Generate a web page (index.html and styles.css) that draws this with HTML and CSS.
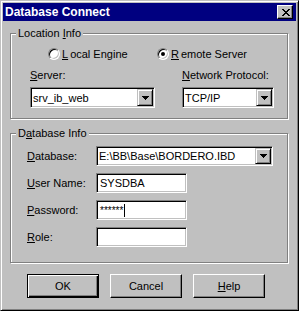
FILE: index.html
```html
<!DOCTYPE html>
<html lang="en">
<head>
  <meta charset="UTF-8">
  <title>Database Connect</title>
  <link rel="stylesheet" href="styles.css">
</head>
<body>
  <div class="window">
    <div class="titlebar">
      <span class="title">Database Connect</span>
      <span class="close-btn">
        <svg width="8" height="7" viewBox="0 0 8 7" shape-rendering="crispEdges">
          <path d="M0 0h2v1h-2z M6 0h2v1h-2z M1 1h2v1h-2z M5 1h2v1h-2z M2 2h4v1h-4z M3 3h2v1h-2z M2 4h4v1h-4z M1 5h2v1h-2z M5 5h2v1h-2z M0 6h2v1h-2z M6 6h2v1h-2z" fill="#000"/>
        </svg>
      </span>
    </div>

    <div class="dialog">
      <!-- Location -->
      <fieldset class="group">
        <legend>Location <u>I</u>nfo</legend>
        <div class="radio-row">
          <label class="radio"><span class="radio-mark"></span><u>L</u>ocal Engine</label>
          <label class="radio"><span class="radio-mark checked"></span><u>R</u>emote Server</label>
        </div>
        <div class="server-row">
          <div class="field-col">
            <div class="field-label"><u>S</u>erver:</div>
            <div class="combo combo-server">
              <span class="combo-text">srv_ib_web</span>
              <span class="combo-btn">
                <svg width="7" height="4" viewBox="0 0 7 4" shape-rendering="crispEdges"><path d="M0 0h7v1h-7z M1 1h5v1h-5z M2 2h3v1h-3z M3 3h1v1h-1z" fill="#000"/></svg>
              </span>
            </div>
          </div>
          <div class="field-col">
            <div class="field-label"><u>N</u>etwork Protocol:</div>
            <div class="combo combo-protocol">
              <span class="combo-text">TCP/IP</span>
              <span class="combo-btn">
                <svg width="7" height="4" viewBox="0 0 7 4" shape-rendering="crispEdges"><path d="M0 0h7v1h-7z M1 1h5v1h-5z M2 2h3v1h-3z M3 3h1v1h-1z" fill="#000"/></svg>
              </span>
            </div>
          </div>
        </div>
      </fieldset>

      <!-- Database -->
      <fieldset class="group group-db">
        <legend>D<u>a</u>tabase Info</legend>
        <div class="db-grid">
          <span class="field-label"><u>D</u>atabase:</span>
          <div class="combo combo-db">
            <span class="combo-text">E:\BB\Base\BORDERO.IBD</span>
            <span class="combo-btn">
              <svg width="7" height="4" viewBox="0 0 7 4" shape-rendering="crispEdges"><path d="M0 0h7v1h-7z M1 1h5v1h-5z M2 2h3v1h-3z M3 3h1v1h-1z" fill="#000"/></svg>
            </span>
          </div>

          <span class="field-label"><u>U</u>ser Name:</span>
          <div class="edit">SYSDBA</div>

          <span class="field-label"><u>P</u>assword:</span>
          <div class="edit"><span class="stars">******</span><span class="caret"></span></div>

          <span class="field-label"><u>R</u>ole:</span>
          <div class="edit"></div>
        </div>
      </fieldset>

      <div class="buttons">
        <div class="btn btn-default">OK</div>
        <div class="btn">Cancel</div>
        <div class="btn"><span><u>H</u>elp</span></div>
      </div>
    </div>
  </div>
</body>
</html>
```

FILE: styles.css
```css
* {
  box-sizing: border-box;
}
body {
  margin: 0;
  background: #c0c0c0;
  font-family: "Liberation Sans", Arial, sans-serif;
  font-size: 11px;
  color: #000;
}
u {
  text-decoration: underline;
  text-underline-offset: 1px;
}
.window {
  width: 299px;
  height: 311px;
  padding: 2px;
  background: #c0c0c0;
  border: 1px solid;
  border-color: #c0c0c0 #000 #000 #c0c0c0;
  box-shadow: inset 1px 1px #fff, inset -1px -1px #808080;
}
.titlebar {
  display: flex;
  align-items: center;
  height: 18px;
  padding: 0 3px 0 2px;
  background: #000080;
  color: #fff;
}
.title {
  font-size: 12px;
  font-weight: bold;
  line-height: 18px;
}
.close-btn {
  display: flex;
  width: 16px;
  height: 14px;
  margin-left: auto;
  padding: 3px 0 0 4px;
  background: #c0c0c0;
  border: 1px solid;
  border-color: #fff #000 #000 #fff;
  box-shadow: inset -1px -1px #808080;
}
.dialog {
  padding: 6px 8px 0 7px;
}
.group {
  margin: 0;
  min-width: 0;
  padding: 8px 0 10px 5px;
  border: 1px solid #808080;
  box-shadow: inset 1px 1px #fff, 1px 1px #fff;
}
.group legend {
  padding: 0 2px;
  line-height: 13px;
  background: #c0c0c0;
}
.group-db {
  margin-top: 8px;
  padding: 6px 0 15px 5px;
}
.radio-row {
  display: grid;
  grid-template-columns: 109px auto;
  height: 12px;
  padding-left: 32px;
}
.radio {
  display: flex;
  align-items: center;
  gap: 2px;
  line-height: 12px;
}
.radio-mark {
  display: flex;
  align-items: center;
  justify-content: center;
  width: 12px;
  height: 12px;
  border-radius: 50%;
  background: #fff;
  border: 1px solid;
  border-color: #808080 #fff #fff #808080;
  box-shadow: inset 1px 1px #000, inset -1px -1px #c0c0c0;
}
.radio-mark.checked::after {
  content: "";
  width: 4px;
  height: 4px;
  border-radius: 50%;
  background: #000;
}
.server-row {
  display: flex;
  gap: 27px;
  margin-top: 9px;
  padding-left: 14px;
}
.field-label {
  line-height: 13px;
}
.field-col .field-label {
  margin-bottom: 5px;
}
.combo {
  display: flex;
  height: 21px;
  padding: 1px;
  background: #fff;
  border: 1px solid;
  border-color: #808080 #fff #fff #808080;
  box-shadow: inset 1px 1px #000, inset -1px -1px #c0c0c0;
}
.combo-server {
  width: 125px;
}
.combo-protocol {
  width: 92px;
}
.combo-db {
  width: 177px;
  height: 20px;
}
.combo-text {
  flex: 1;
  display: flex;
  align-items: center;
  padding-left: 1px;
  white-space: nowrap;
  overflow: hidden;
}
.combo-btn {
  display: flex;
  align-items: center;
  justify-content: center;
  width: 16px;
  background: #c0c0c0;
  border: 1px solid;
  border-color: #c0c0c0 #000 #000 #c0c0c0;
  box-shadow: inset 1px 1px #fff, inset -1px -1px #808080;
}
.db-grid {
  display: grid;
  grid-template-columns: 69px auto;
  row-gap: 7px;
  align-items: center;
  justify-items: start;
  padding-left: 11px;
}
.edit {
  display: flex;
  align-items: center;
  width: 91px;
  height: 20px;
  padding: 0 2px 0 3px;
  background: #fff;
  border: 1px solid;
  border-color: #808080 #fff #fff #808080;
  box-shadow: inset 1px 1px #000, inset -1px -1px #c0c0c0;
}
.stars {
  font-size: 10px;
}
.caret {
  width: 1px;
  height: 13px;
  margin-left: 1px;
  background: #000;
}
.buttons {
  display: flex;
  gap: 11px;
  margin-top: 11px;
  padding-left: 17px;
}
.btn {
  display: flex;
  align-items: center;
  justify-content: center;
  width: 72px;
  height: 24px;
  border: 1px solid;
  border-color: #fff #000 #000 #fff;
  box-shadow: inset -1px -1px #808080;
}
.btn-default {
  border-color: #000;
  box-shadow: inset 1px 1px #fff, inset -1px -1px #000, inset -2px -2px #808080;
}
```
